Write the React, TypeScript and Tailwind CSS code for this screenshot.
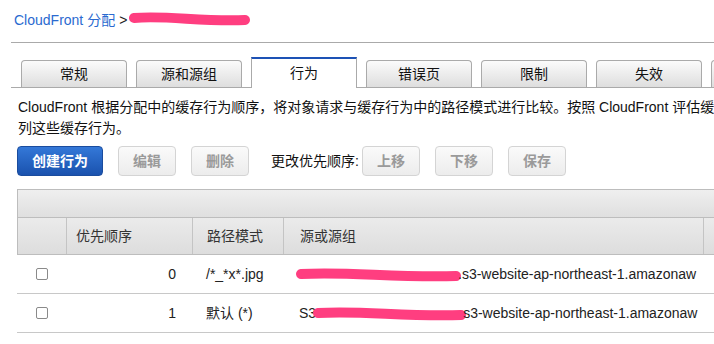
import React from "react";

const font = "font-['Liberation_Sans','Noto_Sans_CJK_SC',sans-serif]";

function Scribble({ w, className = "" }: { w: number; className?: string }) {
  return (
    <svg width={w} height="16" viewBox={`0 0 ${w} 16`} className={`shrink-0 ${className}`}>
      <path
        d={`M5 7 C ${w * 0.3} 4, ${w * 0.6} 11, ${w - 6} 9`}
        stroke="#ff3e80"
        strokeWidth="10"
        strokeLinecap="round"
        fill="none"
      />
    </svg>
  );
}

function Tab({ label, active }: { label: string; active?: boolean }) {
  if (active) {
    return (
      <div className="relative -mb-px h-[31px] w-[106px] shrink-0 bg-white border-x border-[#aaa] border-t-[2px] border-t-[#1d52b5] flex items-center justify-center text-[14px] text-[#111] pb-[1px]">
        {label}
      </div>
    );
  }
  return (
    <div className="h-[27px] w-[106px] shrink-0 rounded-t-[4px] border border-b-0 border-[#aaa] bg-gradient-to-b from-[#fbfbfb] to-[#dedede] flex items-center justify-center text-[14px] text-[#111]">
      {label}
    </div>
  );
}

function GrayBtn({ label }: { label: string }) {
  return (
    <div className="h-[30px] w-[58px] rounded-[4px] border border-[#d4d4d4] bg-gradient-to-b from-[#fafafa] to-[#ececec] flex items-center justify-center text-[14px] font-bold text-[#9a9a9a]">
      {label}
    </div>
  );
}

export default function App() {
  return (
    <div className={`w-[714px] h-[344px] bg-white overflow-hidden ${font} text-[#222]`}>
      <div className="h-[42px] pt-[10px] pl-[14px] leading-[20px] text-[14px] flex items-start">
        <span className="text-[#2a6ad0] h-[20px]">CloudFront 分配</span>
        <span className="ml-[4px] h-[20px]">&gt;</span>
        <Scribble w={122} className="ml-[2px] mt-[1px]" />
      </div>
      <div className="ml-[11px] border-t border-[#aaa]" />

      <div className="ml-[11px] pl-[10px] mt-[14px] flex items-end gap-[9px] border-b border-[#aaa] h-[31px] whitespace-nowrap">
        <Tab label="常规" />
        <Tab label="源和源组" />
        <Tab label="行为" active />
        <Tab label="错误页" />
        <Tab label="限制" />
        <Tab label="失效" />
        <Tab label="" />
      </div>

      <div className="pt-[9px] pl-[18px] text-[14px] leading-[21px] text-[#111]">
        <div className="whitespace-nowrap">
          CloudFront 根据分配中的缓存行为顺序，将对象请求与缓存行为中的路径模式进行比较。按照 CloudFront 评估缓存行为的顺序排
        </div>
        <div>列这些缓存行为。</div>
      </div>

      <div className="mt-[7px] pl-[17px] flex items-center h-[30px]">
        <div className="h-[30px] w-[86px] rounded-[4px] border border-[#1a4c9e] bg-gradient-to-b from-[#3478d8] to-[#1a52ae] flex items-center justify-center text-[14px] font-bold text-white">
          创建行为
        </div>
        <div className="ml-[15px]">
          <GrayBtn label="编辑" />
        </div>
        <div className="ml-[15px]">
          <GrayBtn label="删除" />
        </div>
        <span className="ml-[22px] text-[14px] text-[#111]">更改优先顺序:</span>
        <div className="ml-[3px]">
          <GrayBtn label="上移" />
        </div>
        <div className="ml-[15px]">
          <GrayBtn label="下移" />
        </div>
        <div className="ml-[15px]">
          <GrayBtn label="保存" />
        </div>
      </div>

      <div className="mt-[13px] ml-[17px] w-[760px] text-[14px]">
        <div className="h-[29px] border border-[#bdbdbd] bg-gradient-to-b from-[#efefef] to-[#dfdfdf]" />
        <div className="grid grid-cols-[49px_126px_91px_420px_74px] h-[37px] border-x border-b border-[#bdbdbd] bg-gradient-to-b from-[#ebebeb] to-[#dddddd] text-[#333]">
          <div className="border-r border-[#c4c4c4]" />
          <div className="border-r border-[#c4c4c4] flex items-center pl-[9px]">优先顺序</div>
          <div className="border-r border-[#c4c4c4] flex items-center pl-[14px]">路径模式</div>
          <div className="border-r border-[#c4c4c4] flex items-center pl-[16px]">源或源组</div>
          <div />
        </div>
        {[
          { n: "0", p: "/*_*x*.jpg", pre: "", rest: ".s3-website-ap-northeast-1.amazonaw", sw: 166 },
          { n: "1", p: "默认 (*)", pre: "S3", rest: "s3-website-ap-northeast-1.amazonaw", sw: 154 },
        ].map((r) => (
          <div
            key={r.n}
            className="grid grid-cols-[49px_126px_91px_420px_74px] h-[39px] border-b border-[#c8c8c8] text-[#222]"
          >
            <div className="flex items-center justify-center">
              <div className="w-[12px] h-[12px] rounded-[2px] border border-[#8a8a8a] bg-white" />
            </div>
            <div className="flex items-center justify-end pr-[16px]">{r.n}</div>
            <div className="flex items-center pl-[14px]">{r.p}</div>
            <div className="flex items-center pl-[16px] whitespace-nowrap">
              {r.pre && <span>{r.pre}</span>}
              <Scribble w={r.sw} className="-ml-[3px] mt-[1px]" />
              <span className="-ml-[4px]">{r.rest}</span>
            </div>
            <div />
          </div>
        ))}
      </div>
    </div>
  );
}
